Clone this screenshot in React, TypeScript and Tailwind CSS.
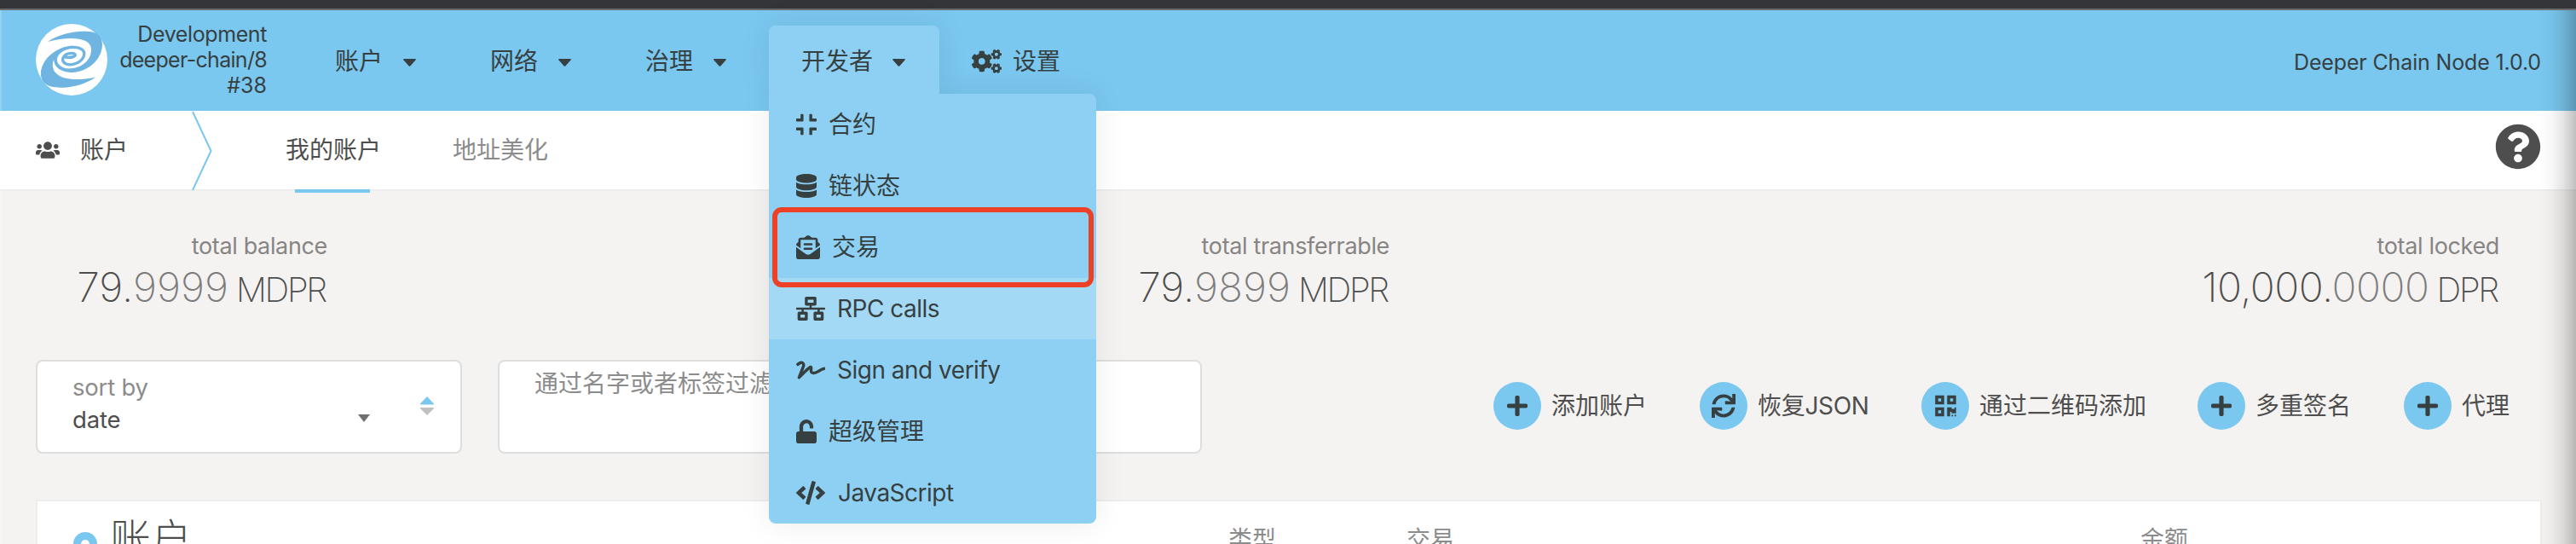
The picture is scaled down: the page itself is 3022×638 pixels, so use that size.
import React from "react";
import {
  FaUsers, FaCompress, FaDatabase, FaEnvelopeOpenText, FaNetworkWired, FaSignature,
  FaUnlock, FaCode, FaCogs, FaQuestionCircle, FaPlus, FaSync, FaQrcode,
} from "react-icons/fa";
import type { IconType } from "react-icons";

const Logo = () => (
  <svg className="h-[84px] w-[84px] shrink-0" viewBox="24 24 252 252" fill="none">
    <circle cx="150" cy="150" r="126" fill="#fff" />
    <path fill="#70b5e1" d="M66 87C115 53 190 44 230 55C264 66 266 112 242 146C218 181 172 201 130 193C102 187 86 168 88 148L98 142C96 168 118 184 148 181C190 177 220 148 219 113C218 72 145 66 66 87Z" />
    <path fill="#70b5e1" d="M234 212C190 242 120 256 76 244C38 232 34 194 52 162C70 128 115 100 155 101L155 111C124 112 100 128 99 150L87 150C70 196 112 236 234 212Z" />
    <path stroke="#70b5e1" strokeWidth="10" strokeLinecap="round" d="M93 152C95 126 122 107 155 106C188 106 200 122 192 140C183 160 152 173 131 165C111 156 118 135 137 129C155 124 168 130 161 137C155 143 141 143 133 141" />
    <path stroke="#fff" strokeWidth="5" d="M102 150C102 132 124 116 150 115C178 114 188 125 181 138C172 155 150 162 137 158" />
    <path stroke="#70b5e1" strokeWidth="8" strokeLinecap="round" d="M128 142L158 139" />
  </svg>
);

const Caret = () => (
  <svg className="mt-[3px] h-[9px] w-[15px] shrink-0" viewBox="0 0 15 9">
    <path d="M1 0H14Q15.500 0 14.500 1.400L8.500 8.200Q7.500 9.200 6.500 8.200L.5 1.400Q-.5 0 1 0Z" fill="#374041" />
  </svg>
);

const NavItem = ({ label, className }: { label: string; className: string }) => (
  <div className={"flex shrink-0 items-center justify-between " + className}>
    <span>{label}</span>
    <Caret />
  </div>
);

const entries: { icon: IconType; label: string; size: string; gap: string; active?: boolean }[] = [
  { icon: FaCompress, label: "合约", size: "w-[24px] h-[28px]", gap: "ml-[14px]" },
  { icon: FaDatabase, label: "链状态", size: "w-[24px] h-[28px]", gap: "ml-[14px]" },
  { icon: FaEnvelopeOpenText, label: "交易", size: "w-[28px] h-[28px]", gap: "ml-[14px]" },
  { icon: FaNetworkWired, label: "RPC calls", size: "w-[34px] h-[28px]", gap: "ml-[14px]", active: true },
  { icon: FaSignature, label: "Sign and verify", size: "w-[34px] h-[28px]", gap: "ml-[14px]" },
  { icon: FaUnlock, label: "超级管理", size: "w-[24px] h-[28px]", gap: "ml-[14px]" },
  { icon: FaCode, label: "JavaScript", size: "w-[34px] h-[28px]", gap: "ml-[15px]" },
];

const DevMenu = () => (
  <div className="absolute left-0 top-[80px] z-10 h-[504px] w-[384px] rounded-b-[8px] rounded-tr-[8px] bg-[#8ed0f3] shadow-[0_0_36px_rgba(0,0,0,0.08)]">
    {entries.map(({ icon: Icon, label, size, gap, active }) => (
      <div key={label} className={"flex h-[72px] items-center pl-[32px] " + (active ? "bg-[#a4d9f5]" : "")}>
        <Icon className={"shrink-0 " + size} preserveAspectRatio="none" />
        <span className={/[A-Z]/.test(label) ? "tracking-[-0.5px] " + gap : gap}>{label}</span>
      </div>
    ))}
    <div className="absolute left-[4px] top-[133px] h-[94px] w-[377px] rounded-[11px] border-[6px] border-[#ec4126]" />
  </div>
);

const Balance = ({ label, whole, fraction, unit, className }: { label: string; whole: string; fraction: string; unit: string; className: string }) => (
  <div className={"flex flex-col items-end text-right " + className}>
    <span className="text-[27px] leading-[34px] tracking-[-0.35px] text-[#868584]">{label}</span>
    <span className={"mt-[3px] text-[48px] font-extralight leading-[56px] text-[#4e4e4e] " + (whole.length > 2 ? "tracking-[-0.5px]" : "")}>
      {whole}.<span className="text-[#7d7d7d]">{fraction}</span>
      <span className="ml-[9px] mr-[2px] text-[40px] tracking-[-2.3px]">{unit}</span>
    </span>
  </div>
);

const Action = ({ icon: Icon, label, size, className }: { icon: IconType; label: string; size: string; className: string }) => (
  <div className={"flex shrink-0 items-center gap-[12px] " + className}>
    <span className="flex h-[56px] w-[56px] items-center justify-center rounded-full bg-[#7ac7ef] text-[#374041]">
      <Icon className={size} />
    </span>
    <span className="whitespace-nowrap">{label}</span>
  </div>
);

export default function App() {
  return (
    <div className="relative flex h-[638px] w-[3022px] flex-col overflow-hidden bg-[#f4f3f1] font-['Inter','Noto_Sans_CJK_SC',sans-serif] text-[28px] leading-[36px] text-[#4e4e4e]">
      <div className="h-[12px] shrink-0 border-b-2 border-[#6b6b6b] bg-[#343539]" />

      <header className="flex h-[118px] shrink-0 items-start bg-[#7ac7ef] pl-[42px] pr-[41px] text-[#374041]">
        <div className="flex h-[118px] w-[271px] items-center justify-between pb-[2px]">
          <Logo />
          <div className="text-right text-[25px] leading-[30px]">
            <div className="tracking-[-0.4px]">Development</div>
            <div className="tracking-[-0.7px]">deeper-chain/8</div>
            <div>#38</div>
          </div>
        </div>
        <nav className="flex flex-1 items-start pt-[18px]">
          <NavItem label="账户" className="ml-[80px] h-[84px] w-[95px]" />
          <NavItem label="网络" className="ml-[87px] h-[84px] w-[95px]" />
          <NavItem label="治理" className="ml-[87px] h-[84px] w-[95px]" />
          <div className="relative ml-[50px] h-[80px] w-[200px] shrink-0 rounded-t-[8px] bg-[#8ed0f3] shadow-[0_0_36px_rgba(0,0,0,0.08)]">
            <DevMenu />
            <div className="relative z-20 rounded-t-[8px] bg-[#8ed0f3]">
              <NavItem label="开发者" className="ml-[38px] h-[84px] w-[122px]" />
            </div>
          </div>
          <div className="ml-[38px] flex h-[84px] items-center">
            <FaCogs className="h-[28px] w-[35px]" />
            <span className="ml-[13px]">设置</span>
          </div>
        </nav>
        <div className="pt-[44px] text-[25px] leading-[34px] tracking-[-0.15px]">Deeper Chain Node 1.0.0</div>
      </header>

      <div className="flex h-[94px] shrink-0 items-start border-b-2 border-[#eeedec] bg-white pl-[42px] pr-[41px]">
        <div className="flex h-[92px] items-center">
          <FaUsers className="h-[28px] w-[28px]" />
          <span className="ml-[24px]">账户</span>
        </div>
        <svg className="ml-[74px] h-[94px] w-[26px]" viewBox="0 0 26 94" fill="none">
          <path d="M2 1L23.500 47L2 93" stroke="#7ac7ef" strokeWidth="2" />
        </svg>
        <div className="ml-[85px] flex h-[96px] flex-col items-center justify-between">
          <span className="flex h-[92px] items-center">我的账户</span>
          <span className="mr-[2px] h-[4px] w-[88px] shrink-0 bg-[#7ac7ef]" />
        </div>
        <span className="ml-[84px] flex h-[92px] items-center text-[#8c8c8c]">地址美化</span>
        <FaQuestionCircle className="ml-auto mt-[15px] h-[54px] w-[54px]" />
      </div>

      <section className="flex h-[198px] shrink-0 pt-[48px]">
        <Balance label="total balance" whole="79" fraction="9999" unit="MDPR" className="w-[384px]" />
        <Balance label="total transferrable" whole="79" fraction="9899" unit="MDPR" className="w-[1246px]" />
        <Balance label="total locked" whole="10,000" fraction="0000" unit="DPR" className="w-[1302px]" />
      </section>

      <section className="flex h-[110px] shrink-0 items-start pl-[42px]">
        <div className="flex h-[110px] w-[500px] shrink-0 rounded-[8px] border-2 border-[#dededf] bg-white pl-[41px]">
          <div className="w-[335px] pt-[11px] text-[27.5px] tracking-[-0.2px]">
            <div className="leading-[38px] text-[#8c8c8c]">sort by</div>
            <div className="leading-[38px]">date</div>
          </div>
          <svg className="mt-[62px] h-[9px] w-[14px]" viewBox="0 0 14 9">
            <path d="M0 0H14L7 9Z" fill="#707070" />
          </svg>
          <svg className="ml-[59px] mt-[41px] h-[22px] w-[16px]" viewBox="0 0 16 22">
            <path d="M8 0L16 8.500V9.500H0V8.500Z" fill="#7ac7ef" />
            <path d="M0 13H16V14L8 22L0 14Z" fill="#c0c0c0" />
          </svg>
        </div>
        <div className="ml-[42px] h-[110px] w-[826px] shrink-0 rounded-[8px] border-2 border-[#dededf] bg-white pl-[41px] pt-[8px] text-[#8c8c8c]">通过名字或者标签过滤</div>
        <Action icon={FaPlus} label="添加账户" size="h-[28px] w-[24px]" className="ml-[342px] mt-[26px] w-[242px]" />
        <Action icon={FaSync} label="恢复JSON" size="h-[28px] w-[28px]" className="mt-[26px] w-[260px] tracking-[-0.3px]" />
        <Action icon={FaQrcode} label="通过二维码添加" size="h-[28px] w-[25px]" className="mt-[26px] w-[324px]" />
        <Action icon={FaPlus} label="多重签名" size="h-[28px] w-[24px]" className="mt-[26px] w-[242px]" />
        <Action icon={FaPlus} label="代理" size="h-[28px] w-[24px]" className="mt-[26px]" />
      </section>

      <section className="ml-[42px] mt-[54px] flex h-[120px] w-[2940px] shrink-0 border-2 border-[#eeedec] bg-white text-[#8c8c8c]">
        <svg className="ml-[42px] mt-[36px] h-[28px] w-[28px]" viewBox="0 0 28 28">
          <circle cx="14" cy="14" r="9.500" fill="none" stroke="#7ac7ef" strokeWidth="9" />
        </svg>
        <span className="ml-[15px] w-[1312px] pt-[11px] text-[48px] font-extralight leading-[66px] text-[#4e4e4e]">账户</span>
        <span className="w-[209px] pt-[27px]">类型</span>
        <span className="w-[861px] pt-[27px]">交易</span>
        <span className="pt-[27px]">金额</span>
      </section>

      <div className="absolute bottom-0 left-0 top-[12px] w-[2px] bg-white/20" />
      <div className="absolute bottom-0 right-0 top-[12px] w-[44px] bg-[linear-gradient(to_right,transparent,rgba(0,0,0,0.03)_35%,rgba(0,0,0,0.10)_65%,rgba(0,0,0,0.25))]" />
    </div>
  );
}
